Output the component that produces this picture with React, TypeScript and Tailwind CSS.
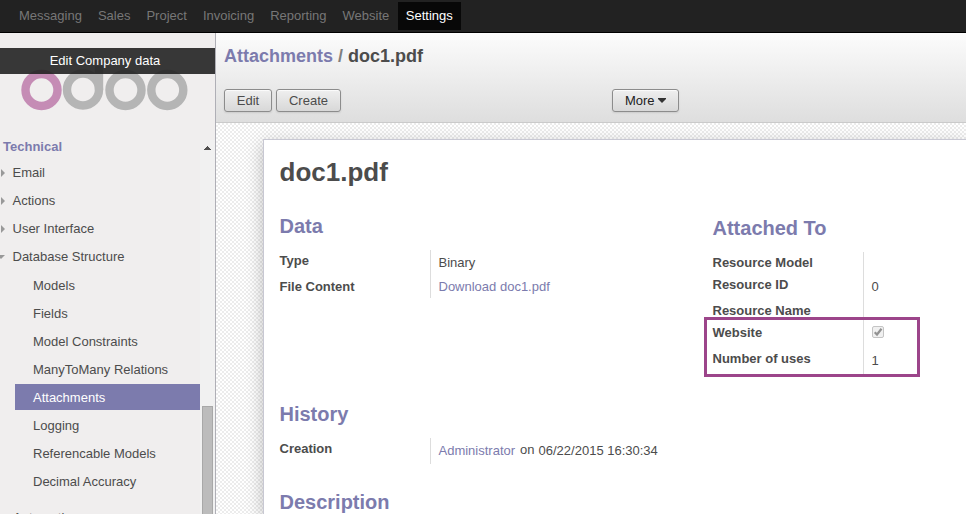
import React from "react";

const menus = ["Messaging", "Sales", "Project", "Invoicing", "Reporting", "Website"];
const groups = ["Email", "Actions", "User Interface"];
const entries = [
  "Models",
  "Fields",
  "Model Constraints",
  "ManyToMany Relations",
  "Attachments",
  "Logging",
  "Referencable Models",
  "Decimal Accuracy",
];

function TopBar() {
  return (
    <nav className="flex h-[33px] shrink-0 items-start border-b border-black bg-[#222] pt-[2px] pl-[11px] leading-[28px] text-[#777]">
      {menus.map((m) => (
        <span key={m} className="px-2">{m}</span>
      ))}
      <span className="ml-px w-[63px] bg-[#080808] pl-[7.5px] text-white">Settings</span>
    </nav>
  );
}

function Logo() {
  return (
    <svg className="block h-[46px] w-[215px]" viewBox="0 66 215 46" fill="none" strokeWidth="8.4">
      <circle cx="41.5" cy="90" r="16" stroke="#c58cb5" />
      <g stroke="#b5b5b5">
        <circle cx="83" cy="89.5" r="16" />
        <path d="M99 62V90" />
        <circle cx="125.5" cy="90" r="16" />
        <circle cx="167.3" cy="90" r="16" />
      </g>
    </svg>
  );
}

function Sidebar() {
  return (
    <aside className="flex w-[216px] shrink-0 flex-col border-r border-[#afafb6] bg-[#f0eeee]">
      <div className="relative h-[107px] shrink-0 pt-[33px]">
        <Logo />
        <div className="absolute top-[15px] left-0 h-[26px] w-full bg-[#222]/90 pr-[5px] text-center leading-[26px] text-white">
          Edit Company data
        </div>
      </div>
      <div className="flex min-h-0 flex-1">
        <div className="w-[200px] shrink-0">
          <div className="h-[19px] pl-[3px] leading-[13px] font-bold text-[#7c7bad]">Technical</div>
          {groups.map((g) => (
            <div key={g} className="flex h-7 items-center">
              <svg className="mr-[7.5px] ml-px h-2 w-1" viewBox="0 0 4 8"><path d="M0 0L4 4L0 8Z" fill="#999" /></svg>
              {g}
            </div>
          ))}
          <div className="flex h-7 items-center">
            <svg className="mr-[7.5px] h-1 w-[5px]" viewBox="0 0 5 4"><path d="M-3 0H5L1 4Z" fill="#999" /></svg>
            Database Structure
          </div>
          <div className="mt-[1px] flex flex-col gap-[2px] pl-[15px]">
            {entries.map((e) => (
              <div
                key={e}
                className={e === "Attachments" ? "h-[26px] bg-[#7c7bad] pl-[18px] leading-[28px] text-white" : "h-[26px] pl-[18px] leading-[28px]"}
              >
                {e}
              </div>
            ))}
          </div>
          <div className="mt-[11px] pl-[13px] leading-[26px]">Automation</div>
        </div>
        <div className="flex w-[15px] flex-col justify-between bg-[#f1f1f1]">
          <svg className="mt-[6px] ml-1 h-1 w-[7px]" viewBox="0 0 7 4"><path d="M3 0H4V1H5V2H6V3H7V4H0V3H1V2H2V1H3Z" fill="#505050" /></svg>
          <div className="ml-[2px] h-[108px] w-[11px] border border-b-0 border-[#a8a8a8] bg-[#bcbcbc]" />
        </div>
      </div>
    </aside>
  );
}

function Button({ children, className }: { children: React.ReactNode; className: string }) {
  return (
    <button
      className={`flex h-[23px] items-center justify-center rounded-[3px] border border-[#8c8c8c] bg-gradient-to-b from-[#efefef] to-[#d8d8d8] shadow-[0_1px_2px_rgba(0,0,0,0.1),inset_0_1px_1px_rgba(255,255,255,0.8)] ${className}`}
    >
      {children}
    </button>
  );
}

function Header() {
  return (
    <header className="h-[90px] shrink-0 border-b border-[#cacaca] bg-gradient-to-b from-[#fcfcfc] to-[#dedede] pl-2">
      <h2 className="h-14 pt-[11px] text-[18px] leading-6 font-bold">
        <span className="text-[#7c7bad]">Attachments</span>
        <span className="text-[#7f7f7f]"> / </span>doc1.pdf
      </h2>
      <div className="flex">
        <Button className="w-[48px]">Edit</Button>
        <Button className="ml-1 w-[65px]">Create</Button>
        <Button className="ml-[271px] w-[67px] text-[#222]">
          More
          <svg className="ml-[3.5px] h-[5px] w-2" viewBox="0 0 8 5"><path d="M0 0H8V1L4 5L0 1Z" fill="#333" /></svg>
        </Button>
      </div>
    </header>
  );
}

function Title({ children }: { children: React.ReactNode }) {
  return <h3 className="h-6 text-[20px] leading-6 font-bold text-[#7c7bad]">{children}</h3>;
}

function Sheet() {
  return (
    <section className="ml-[47px] flex-1 border-t border-l border-[#c8c8d3] bg-white pl-[15.5px] shadow-[0_5px_16px_rgba(0,0,0,0.25)]">
      <h1 className="pt-[17px] text-[26px] leading-[30px] font-bold">doc1.pdf</h1>
      <div className="mt-[27px] flex h-[188px]">
        <div className="w-[433px] shrink-0">
          <Title>Data</Title>
          <div className="mt-3 flex h-12">
            <div className="w-[150.5px] font-bold leading-[26px]">
              <div className="-mt-[2px]">Type</div>
              <div>File Content</div>
            </div>
            <div className="border-l border-[#ddd] pl-[7.5px] leading-6">
              <div className="pt-px">Binary</div>
              <div className="text-[#7c7bad]">Download doc1.pdf</div>
            </div>
          </div>
        </div>
        <div className="relative pt-[2px]">
          <Title>Attached To</Title>
          <div className="mt-3 flex h-[122px]">
            <div className="w-[150.5px] pt-px font-bold">
              <div className="h-[22px] leading-[20px]">Resource Model</div>
              <div className="h-[26px] leading-[20px]">Resource ID</div>
              <div className="h-[22px] leading-[20px]">Resource Name</div>
              <div className="h-[26px] leading-[20px]">Website</div>
              <div className="leading-[20px]">Number of uses</div>
            </div>
            <div className="border-l border-[#ddd] pt-[25px] pl-[7.5px]">
              <div className="leading-5">0</div>
              <svg className="mt-[29px] ml-[0.5px] block h-[12px] w-[12px]" viewBox="0 0 12 12">
                <rect x=".5" y=".5" width="11" height="11" rx="1.5" fill="#f0f0f0" stroke="#c4c4c4" />
                <path d="M2.7 6.2L5 8.5L9.5 2.8" fill="none" stroke="#929292" strokeWidth="2.2" />
              </svg>
              <div className="mt-[13px] leading-5">1</div>
            </div>
          </div>
          <div className="absolute top-[103px] -left-[8.5px] h-[60px] w-[216px] border-[3px] border-[#9c458a]" />
        </div>
      </div>
      <Title>History</Title>
      <div className="mt-3 flex h-[26px]">
        <div className="w-[150.5px] pt-px font-bold leading-[20px]">Creation</div>
        <div className="flex border-l border-[#ddd] pt-px pl-[7.5px] leading-6">
          <span className="text-[#7c7bad]">Administrator</span>
          <span className="mr-[4px] ml-[5px] leading-[22px]">on</span>
          <span>06/22/2015 16:30:34</span>
        </div>
      </div>
      <div className="mt-[26px]"><Title>Description</Title></div>
    </section>
  );
}

export default function App() {
  return (
    <div className="flex h-[514px] w-[966px] flex-col overflow-hidden bg-white font-['Liberation_Sans',Arial,sans-serif] text-[13px] text-[#4c4c4c]">
      <TopBar />
      <div className="flex min-h-0 flex-1">
        <Sidebar />
        <main className="flex min-w-0 flex-1 flex-col">
          <Header />
          <div className="flex min-h-0 flex-1 overflow-hidden bg-[repeating-conic-gradient(#ececec_0_25%,#ffffff_0_50%)] bg-[length:4px_4px] pt-4">
            <Sheet />
          </div>
        </main>
      </div>
    </div>
  );
}
